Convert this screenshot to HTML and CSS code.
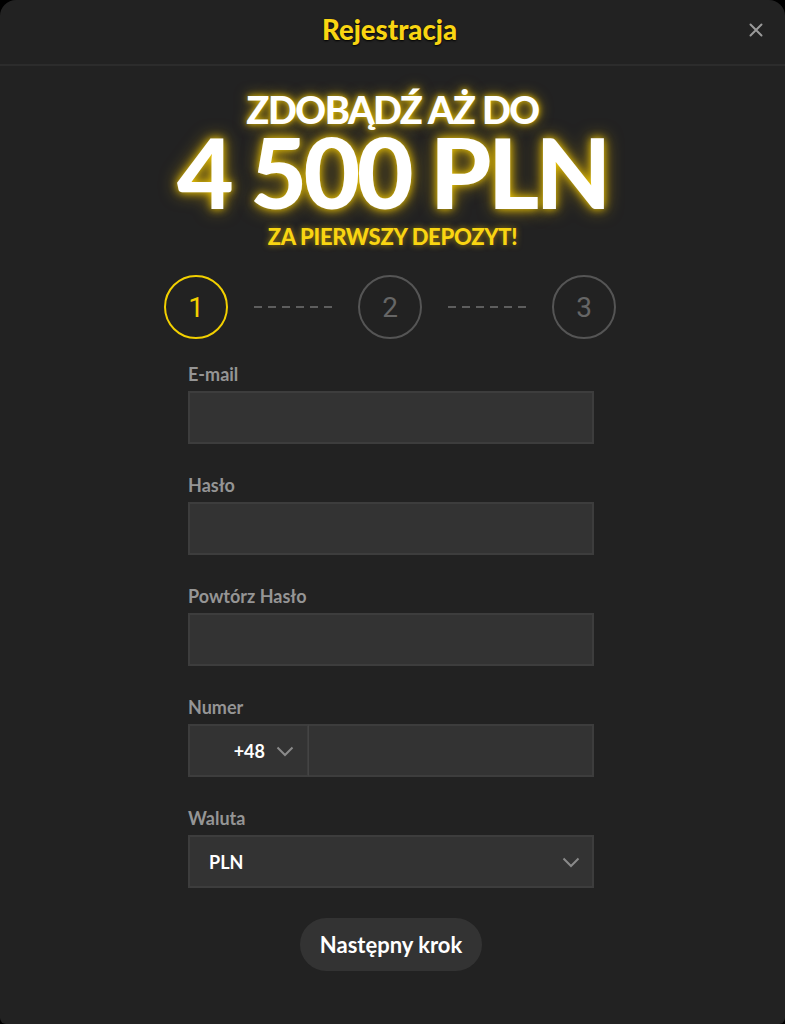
FILE: index.html
```html
<!DOCTYPE html>
<html lang="pl">
<head>
<meta charset="utf-8">
<title>Rejestracja</title>
<link rel="stylesheet" href="styles.css">
</head>
<body>
<div class="modal">
  <header class="modal-header">
    <span></span>
    <h1 class="modal-title">Rejestracja</h1>
    <button class="close" aria-label="Zamknij">
      <svg width="14" height="14" viewBox="0 0 14 14"><path d="M1.5 1.5L12.5 12.5M12.5 1.5L1.5 12.5" stroke="#9a9a9a" stroke-width="2" stroke-linecap="round"/></svg>
    </button>
  </header>

  <section class="promo">
    <div class="promo-top">ZDOBĄDŹ AŻ DO</div>
    <div class="promo-amount">4 500 PLN</div>
    <div class="promo-bottom">ZA PIERWSZY DEPOZYT!</div>
  </section>

  <div class="steps">
    <div class="step active">1</div>
    <svg class="dash" width="78" height="4" viewBox="0 0 78 4"><line x1="0" y1="2" x2="78" y2="2" stroke="#5e5e5e" stroke-width="2" stroke-dasharray="8 6"/></svg>
    <div class="step">2</div>
    <svg class="dash" width="78" height="4" viewBox="0 0 78 4"><line x1="0" y1="2" x2="78" y2="2" stroke="#5e5e5e" stroke-width="2" stroke-dasharray="8 6"/></svg>
    <div class="step">3</div>
  </div>

  <form class="form">
    <div class="field">
      <label class="label">E-mail</label>
      <div class="input"></div>
    </div>
    <div class="field">
      <label class="label">Hasło</label>
      <div class="input"></div>
    </div>
    <div class="field">
      <label class="label">Powtórz Hasło</label>
      <div class="input"></div>
    </div>
    <div class="field">
      <label class="label">Numer</label>
      <div class="phone">
        <div class="prefix">
          <span class="value">+48</span>
          <svg class="chev" width="18" height="11" viewBox="0 0 18 11"><path d="M1.5 1.5L9 9L16.5 1.5" fill="none" stroke="#8a8a8a" stroke-width="2"/></svg>
        </div>
        <div class="input phone-input"></div>
      </div>
    </div>
    <div class="field">
      <label class="label">Waluta</label>
      <div class="input select">
        <span class="value">PLN</span>
        <svg class="chev" width="18" height="11" viewBox="0 0 18 11"><path d="M1.5 1.5L9 9L16.5 1.5" fill="none" stroke="#8a8a8a" stroke-width="2"/></svg>
      </div>
    </div>
    <div class="actions">
      <button type="button" class="next">Następny krok</button>
    </div>
  </form>
</div>
</body>
</html>
```

FILE: styles.css
```css
* { box-sizing: border-box; }

html, body {
  margin: 0;
  padding: 0;
  background: #000;
}

body {
  font-family: "Lato", "Liberation Sans", sans-serif;
  color: #fff;
}

.modal {
  width: 785px;
  height: 1024px;
  background: #222222;
  border-radius: 16px 16px 6px 6px;
  overflow: hidden;
}

.modal-header {
  height: 66px;
  border-bottom: 2px solid #2c2c2c;
  display: grid;
  grid-template-columns: 1fr auto 1fr;
  align-items: center;
}

.modal-title {
  margin: 0;
  font-size: 27.5px;
  font-weight: 900;
  color: #f9d512;
  text-shadow: 0 1px 2px #000;
  line-height: 1;
  padding: 0 6px 4px 0;
}

.close {
  justify-self: end;
  margin-right: 22px;
  margin-bottom: 4px;
  background: none;
  border: 0;
  padding: 0;
  display: flex;
  cursor: pointer;
}

.promo {
  display: flex;
  flex-direction: column;
  align-items: center;
  padding-top: 24px;
  font-weight: 900;
  line-height: 1;
}

.promo-top {
  font-size: 38px;
  color: #fff;
  letter-spacing: -1.5px;
  text-shadow: 0 0 6px rgba(255, 214, 0, 0.9), 0 0 14px rgba(255, 200, 0, 0.6);
}

.promo-amount {
  font-size: 98px;
  line-height: 86px;
  color: #fff;
  letter-spacing: -3.5px;
  text-shadow: 0 0 8px rgba(255, 214, 0, 0.9), 0 0 18px rgba(255, 200, 0, 0.6);
}

.promo-bottom {
  font-size: 22px;
  color: #f9d512;
  margin-top: 12px;
  letter-spacing: -0.3px;
  text-shadow: 0 0 6px rgba(255, 200, 0, 0.6);
}

.steps {
  display: flex;
  justify-content: center;
  align-items: center;
  gap: 26px;
  margin-top: 27px;
  padding-right: 5px;
}

.step {
  width: 64px;
  height: 64px;
  border-radius: 50%;
  border: 2px solid #555;
  color: #666;
  font-family: "Roboto", "Liberation Sans", sans-serif;
  font-size: 28px;
  display: flex;
  align-items: center;
  justify-content: center;
}

.step.active {
  border-color: #f2d000;
  color: #f2d000;
}

.dash { display: block; }

.form {
  width: 406px;
  margin: 24px 0 0 188px;
  display: flex;
  flex-direction: column;
  gap: 30px;
}

.field {
  display: flex;
  flex-direction: column;
  gap: 6px;
}

.label {
  font-size: 18px;
  font-weight: 700;
  line-height: 22px;
  color: #959595;
}

.input {
  height: 53px;
  background: #333333;
  border: 2px solid #3d3d3d;
}

.phone {
  display: flex;
  height: 53px;
}

.prefix {
  width: 120px;
  background: #333333;
  border: 2px solid #3d3d3d;
  border-right-width: 1px;
  display: flex;
  align-items: center;
  justify-content: flex-end;
  gap: 11px;
  padding-right: 13px;
}

.phone-input {
  flex: 1;
  border-left-width: 1px;
  border-left-color: #444;
}

.value {
  font-size: 18px;
  font-weight: 700;
  color: #fff;
}

.chev { display: block; margin-top: 2px; }

.select {
  display: flex;
  align-items: center;
  justify-content: space-between;
  padding: 0 12px 0 19px;
}

.actions {
  display: flex;
  justify-content: center;
}

.next {
  height: 53px;
  padding: 0 20px;
  border: 0;
  border-radius: 27px;
  background: #333333;
  color: #fff;
  font-family: "Lato", "Liberation Sans", sans-serif;
  font-size: 22px;
  font-weight: 700;
  cursor: pointer;
}
```
